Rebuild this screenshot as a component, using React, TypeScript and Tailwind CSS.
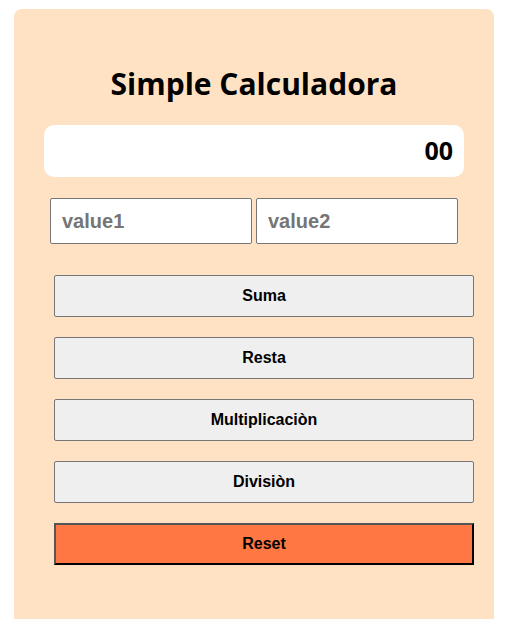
import React from "react";

export default function App() {
  const btn =
    "block w-[420px] h-[42px] ml-[40px] bg-[#efefef] border border-[#767676] rounded-[2px] text-[16px] font-bold text-black [font-family:'Liberation_Sans',Arial,sans-serif]";
  return (
    <div className="w-[510px] h-[619px] bg-white overflow-hidden">
      <div className="ml-[14px] mt-[9px] w-[480px] h-[640px] bg-[#ffe2c3] rounded-[8px] pt-[55px]">
        <h1 className="text-center text-[30px] leading-[40px] font-bold text-black [font-family:'Open_Sans',sans-serif]">
          Simple Calculadora
        </h1>
        <div className="ml-[30px] mt-[21px] w-[420px] h-[52px] bg-white rounded-[10px] flex items-center justify-end pr-[11px]">
          <span className="text-[25px] font-bold text-black [font-family:'Open_Sans',sans-serif]">00</span>
        </div>
        <div className="ml-[36px] mt-[21px] flex gap-[4px]">
          <input
            placeholder="value1"
            className="w-[202px] h-[46px] bg-white border border-[#767676] rounded-[2px] px-[11px] text-[20px] font-bold placeholder:text-[#757575] [font-family:'Liberation_Sans',Arial,sans-serif] outline-none"
          />
          <input
            placeholder="value2"
            className="w-[202px] h-[46px] bg-white border border-[#767676] rounded-[2px] px-[11px] text-[20px] font-bold placeholder:text-[#757575] [font-family:'Liberation_Sans',Arial,sans-serif] outline-none"
          />
        </div>
        <div className="mt-[31px] flex flex-col gap-[20px]">
          <button className={btn}>Suma</button>
          <button className={btn}>Resta</button>
          <button className={btn}>Multiplicaciòn</button>
          <button className={btn}>Divisiòn</button>
          <button className="block w-[420px] h-[42px] ml-[40px] bg-[#ff7743] border-2 border-t-[#555555] border-l-[#555555] border-b-black border-r-black text-[16px] font-bold text-black [font-family:'Liberation_Sans',Arial,sans-serif]">
            Reset
          </button>
        </div>
      </div>
    </div>
  );
}
